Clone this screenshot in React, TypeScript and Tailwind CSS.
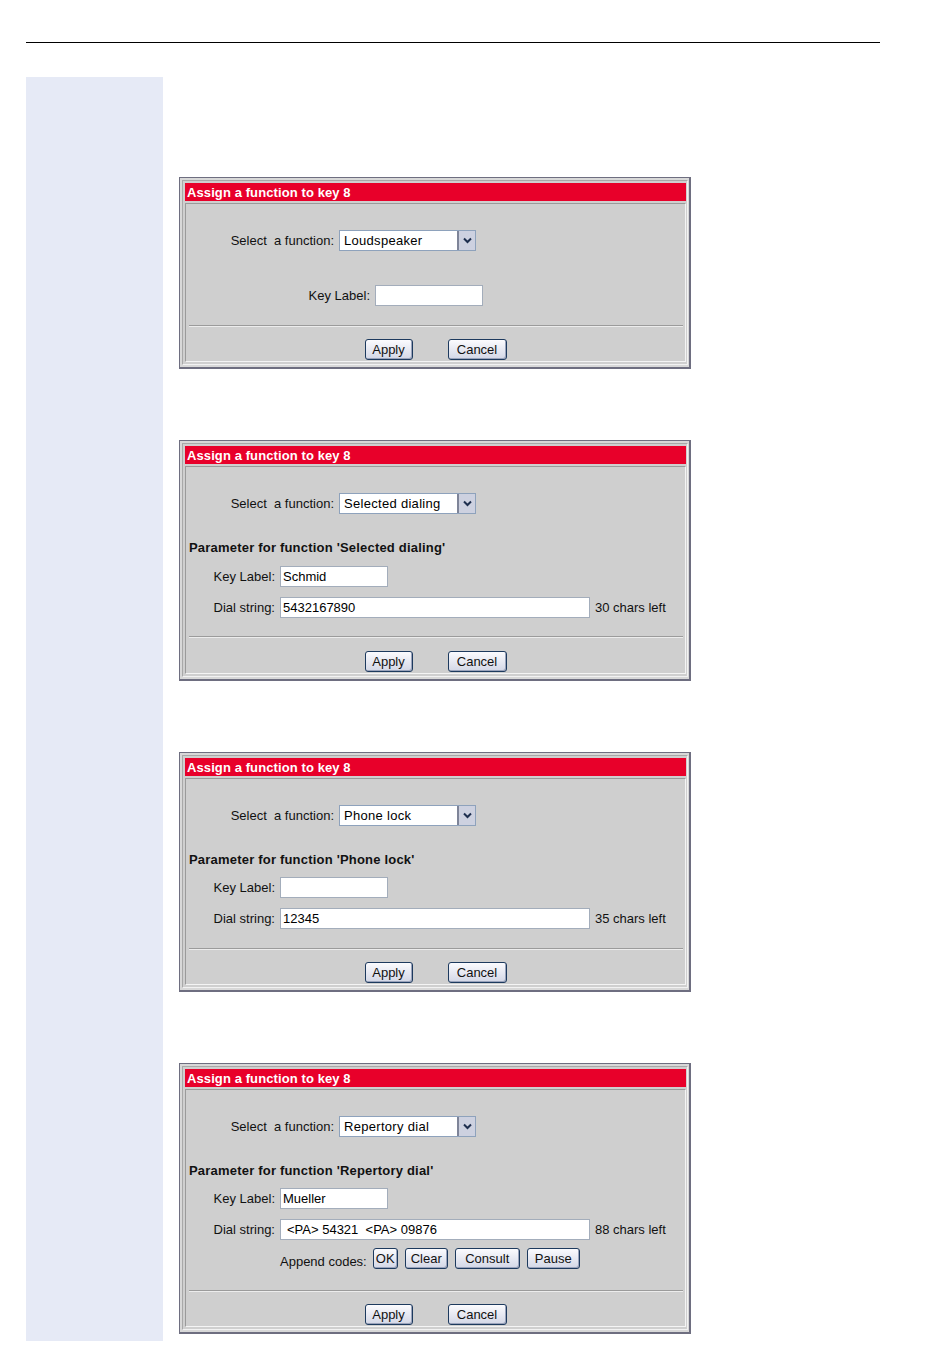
import React from "react";

const Btn: React.FC<{ label: string; w: number; className?: string }> = ({ label, w, className }) => (
  <button
    type="button"
    style={{ width: w }}
    className={
      "h-[21px] rounded-[3px] border border-[#1d3a5e] bg-gradient-to-b from-[#fbfbfe] to-[#d3d7e6] text-[13px] leading-[19px] text-[#111] shadow-[inset_-1px_-1px_0_#9aa3bb] " +
      (className || "")
    }
  >
    {label}
  </button>
);

const TextBox: React.FC<{ value: string; w: number; pl?: string }> = ({ value, w, pl }) => (
  <div
    style={{ width: w }}
    className={
      "h-[21px] border border-[#a3adbb] bg-white text-[13px] leading-[19px] text-black whitespace-pre " +
      (pl || "pl-[2px]")
    }
  >
    {value}
  </div>
);

const SelectRow: React.FC<{ value: string }> = ({ value }) => (
  <div className="flex items-center mt-[26px]">
    <div className="w-[148px] text-right text-[13px] text-[#111]">Select&nbsp; a function:</div>
    <div className="ml-[5px] w-[137px] h-[21px] border border-[#8ea2bc] bg-white flex">
      <div className="flex-1 pl-[4px] text-[13px] leading-[19px] tracking-[0.3px] text-black">{value}</div>
      <div className="w-[18px] h-full border-l-2 border-[#7e8498] bg-[#cdd1e0] flex items-center justify-center">
        <svg width="9" height="7" viewBox="0 0 9 7">
          <path d="M1 1.5 L4.5 5 L8 1.5" fill="none" stroke="#1e2f4f" strokeWidth="2" />
        </svg>
      </div>
    </div>
  </div>
);

const Separator: React.FC<{ mt: string }> = ({ mt }) => (
  <div className={"ml-[3px] mr-[2px] border-t border-[#9b9b9b] border-b border-b-[#ececec] " + mt} />
);

const ButtonsRow: React.FC<{ mt: string }> = ({ mt }) => (
  <div className={"flex justify-center gap-[35px] " + mt}>
    <Btn label="Apply" w={48} />
    <Btn label="Cancel" w={59} />
  </div>
);

const Panel: React.FC<{ children: React.ReactNode }> = ({ children }) => (
  <div className="w-[512px] border-l border-t border-r-2 border-b-2 border-[#6e6e80] bg-[#d8d8d8] p-[2px] pr-px">
    <div className="border border-t-[#a8a8a8] border-l-[#a8a8a8] border-r-[#f2f2f2] border-b-[#f2f2f2] bg-[#cfcfcf] p-[2px] pr-px">
      <div className="h-[18px] bg-[#e8002a] pl-[2px] text-[13px] leading-[19px] font-bold text-white tracking-[0.1px]">
        Assign a function to key 8
      </div>
      <div className="mt-[2px] border border-t-[#9a9a9a] border-l-[#9a9a9a] border-r-[#f4f4f4] border-b-[#f4f4f4] bg-[#cfcfcf] pb-px">
        {children}
      </div>
    </div>
  </div>
);

const LabelRow: React.FC<{ label: string; mt: string; children: React.ReactNode }> = ({ label, mt, children }) => (
  <div className={"flex items-center " + mt}>
    <div className="w-[89px] text-right text-[13px] text-[#111]">{label}</div>
    <div className="ml-[5px] flex items-center">{children}</div>
  </div>
);

const ParamTitle: React.FC<{ name: string }> = ({ name }) => (
  <div className="mt-[26px] pl-[3px] text-[13px] leading-[16px] font-bold text-[#111] tracking-[0.2px]">
    Parameter for function '{name}'
  </div>
);

export default function App() {
  return (
    <div className="w-[950px] h-[1372px] bg-white font-['Liberation_Sans',Arial,sans-serif]">
      <div className="pt-[42px] pl-[26px]">
        <div className="w-[854px] h-px bg-black" />
      </div>
      <div className="flex pl-[26px] mt-[34px]">
        <div className="w-[137px] h-[1264px] bg-[#e6eaf6]" />
        <div className="ml-[16px] pt-[100px] flex flex-col gap-[71px]">
          <Panel>
            <SelectRow value="Loudspeaker" />
            <div className="flex items-center mt-[34px]">
              <div className="w-[184px] text-right text-[13px] text-[#111]">Key Label:</div>
              <div className="ml-[5px]">
                <TextBox value="" w={108} />
              </div>
            </div>
            <Separator mt="mt-[19px]" />
            <ButtonsRow mt="mt-[12px]" />
          </Panel>

          <Panel>
            <SelectRow value="Selected dialing" />
            <ParamTitle name="Selected dialing" />
            <LabelRow label="Key Label:" mt="mt-[10px]">
              <TextBox value="Schmid" w={108} />
            </LabelRow>
            <LabelRow label="Dial string:" mt="mt-[10px]">
              <TextBox value="5432167890" w={310} />
              <span className="ml-[5px] text-[13px] text-[#111]">30 chars left</span>
            </LabelRow>
            <Separator mt="mt-[18px]" />
            <ButtonsRow mt="mt-[13px]" />
          </Panel>

          <Panel>
            <SelectRow value="Phone lock" />
            <ParamTitle name="Phone lock" />
            <LabelRow label="Key Label:" mt="mt-[9px]">
              <TextBox value="" w={108} />
            </LabelRow>
            <LabelRow label="Dial string:" mt="mt-[10px]">
              <TextBox value="12345" w={310} />
              <span className="ml-[5px] text-[13px] text-[#111]">35 chars left</span>
            </LabelRow>
            <Separator mt="mt-[19px]" />
            <ButtonsRow mt="mt-[12px]" />
          </Panel>

          <Panel>
            <SelectRow value="Repertory dial" />
            <ParamTitle name="Repertory dial" />
            <LabelRow label="Key Label:" mt="mt-[9px]">
              <TextBox value="Mueller" w={108} />
            </LabelRow>
            <LabelRow label="Dial string:" mt="mt-[10px]">
              <TextBox value="<PA> 54321  <PA> 09876" w={310} pl="pl-[6px]" />
              <span className="ml-[5px] text-[13px] text-[#111]">88 chars left</span>
            </LabelRow>
            <div className="flex items-end mt-[8px] ml-[94px]">
              <span className="text-[13px] leading-[15px] text-[#111]">Append codes:</span>
              <div className="ml-[6px] flex gap-[7px]">
                <Btn label="OK" w={25} className="leading-[16px]" />
                <Btn label="Clear" w={43} className="leading-[17px]" />
                <Btn label="Consult" w={65} className="leading-[17px]" />
                <Btn label="Pause" w={53} className="leading-[17px]" />
              </div>
            </div>
            <Separator mt="mt-[21px]" />
            <ButtonsRow mt="mt-[12px]" />
          </Panel>
        </div>
      </div>
    </div>
  );
}
